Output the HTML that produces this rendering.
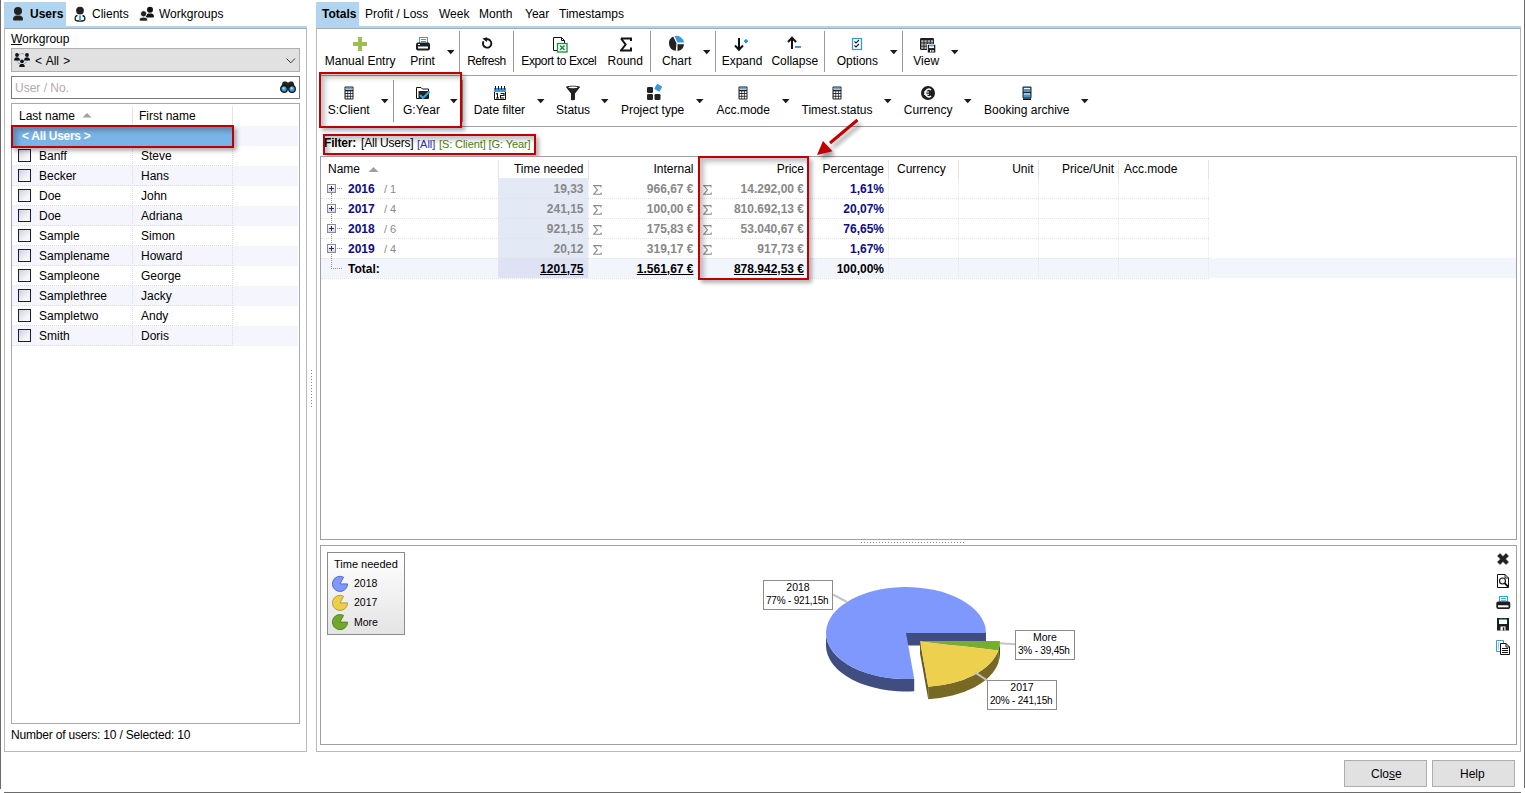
<!DOCTYPE html>
<html><head><meta charset="utf-8">
<style>
*{margin:0;padding:0;box-sizing:border-box}
html,body{width:1525px;height:793px;overflow:hidden;background:#fff}
body{position:relative;font-family:"Liberation Sans",sans-serif;font-size:12px;color:#000}
.a{position:absolute}
.t{position:absolute;white-space:nowrap;line-height:14px;font-size:12px}
.b{font-weight:bold}
.ln{position:absolute;background:#a0a0a0}
</style></head><body>
<!-- window frame -->
<div class="a" style="left:0;top:0;width:1px;height:789px;background:#6b6b6b"></div>
<div class="a" style="left:1524;top:0;width:1px;height:788px;background:#6b6b6b;left:1524px"></div>
<div class="a" style="left:4px;top:792px;width:1517px;height:1px;background:#6b6b6b"></div>

<!-- LEFT PANEL -->
<div class="a" style="left:4px;top:2px;width:62px;height:24px;background:#b1d5f0"></div>
<div class="a" style="left:4px;top:26px;width:303px;height:2px;background:#b1d5f0"></div>
<div class="a" style="left:4px;top:28px;width:303px;height:724px;border:1px solid #b9b9b9;border-top-color:#aaa"></div>
<div class="t b" style="left:30px;top:7px">Users</div>
<div class="t" style="left:92px;top:7px">Clients</div>
<div class="t" style="left:159px;top:7px">Workgroups</div>

<div class="t" style="left:11px;top:32px"><u>W</u>orkgroup</div>
<div class="a" style="left:11px;top:48px;width:289px;height:24px;background:#e1e1e1;border:1px solid #adadad"></div>
<div class="t" style="left:35px;top:54px;word-spacing:1px">&lt; All &gt;</div>
<div class="a" style="left:11px;top:76px;width:289px;height:23px;background:#fff;border:1px solid #7a7a7a"></div>
<div class="t" style="left:15px;top:81px;color:#b0aab0">User / No.</div>

<div class="a" style="left:11px;top:103px;width:289px;height:621px;border:1px solid #a8a8ae"></div>
<div class="t" style="left:19px;top:109px">Last name</div>
<div class="t" style="left:139px;top:109px">First name</div>

<div class="a" style="left:132px;top:106px;width:1px;height:20px;background:#e5e5e5"></div>
<div class="a" style="left:232px;top:106px;width:1px;height:20px;background:#e5e5e5"></div>
<svg class="a" style="left:82px;top:112px" width="10" height="6"><path d="M0.5 5.5 L5 1 L9.5 5.5Z" fill="#a0a0a0"/></svg>
<div class="a" style="left:12px;top:126px;width:286px;height:20px;background:#f5f6fd"></div>
<div class="a" style="left:12px;top:166px;width:286px;height:20px;background:#f5f6fd"></div>
<div class="a" style="left:12px;top:206px;width:286px;height:20px;background:#f5f6fd"></div>
<div class="a" style="left:12px;top:246px;width:286px;height:20px;background:#f5f6fd"></div>
<div class="a" style="left:12px;top:286px;width:286px;height:20px;background:#f5f6fd"></div>
<div class="a" style="left:12px;top:326px;width:286px;height:20px;background:#f5f6fd"></div>
<div class="a" style="left:12px;top:145px;width:221px;height:1px;border-top:1px dotted #dcdcdc"></div>
<div class="a" style="left:12px;top:165px;width:221px;height:1px;border-top:1px dotted #dcdcdc"></div>
<div class="a" style="left:12px;top:185px;width:221px;height:1px;border-top:1px dotted #dcdcdc"></div>
<div class="a" style="left:12px;top:205px;width:221px;height:1px;border-top:1px dotted #dcdcdc"></div>
<div class="a" style="left:12px;top:225px;width:221px;height:1px;border-top:1px dotted #dcdcdc"></div>
<div class="a" style="left:12px;top:245px;width:221px;height:1px;border-top:1px dotted #dcdcdc"></div>
<div class="a" style="left:12px;top:265px;width:221px;height:1px;border-top:1px dotted #dcdcdc"></div>
<div class="a" style="left:12px;top:285px;width:221px;height:1px;border-top:1px dotted #dcdcdc"></div>
<div class="a" style="left:12px;top:305px;width:221px;height:1px;border-top:1px dotted #dcdcdc"></div>
<div class="a" style="left:12px;top:325px;width:221px;height:1px;border-top:1px dotted #dcdcdc"></div>
<div class="a" style="left:12px;top:345px;width:221px;height:1px;border-top:1px dotted #dcdcdc"></div>
<div class="a" style="left:132px;top:126px;width:1px;height:220px;border-left:1px dotted #dcdcdc"></div>
<div class="a" style="left:232px;top:126px;width:1px;height:220px;border-left:1px dotted #dcdcdc"></div>
<div class="a" style="left:12px;top:126px;width:221px;height:20px;background:#79b4e8"></div>
<div class="t b" style="left:22px;top:129px;color:#fff;letter-spacing:-0.3px">&lt; All Users &gt;</div>
<div class="a" style="left:18px;top:149px;width:13px;height:13px;border:1px solid #14195a;background:linear-gradient(135deg,#d2d2d2,#f6f6f6 70%)"></div>
<div class="t" style="left:39px;top:149px">Banff</div>
<div class="t" style="left:141px;top:149px">Steve</div>
<div class="a" style="left:18px;top:169px;width:13px;height:13px;border:1px solid #14195a;background:linear-gradient(135deg,#d2d2d2,#f6f6f6 70%)"></div>
<div class="t" style="left:39px;top:169px">Becker</div>
<div class="t" style="left:141px;top:169px">Hans</div>
<div class="a" style="left:18px;top:189px;width:13px;height:13px;border:1px solid #14195a;background:linear-gradient(135deg,#d2d2d2,#f6f6f6 70%)"></div>
<div class="t" style="left:39px;top:189px">Doe</div>
<div class="t" style="left:141px;top:189px">John</div>
<div class="a" style="left:18px;top:209px;width:13px;height:13px;border:1px solid #14195a;background:linear-gradient(135deg,#d2d2d2,#f6f6f6 70%)"></div>
<div class="t" style="left:39px;top:209px">Doe</div>
<div class="t" style="left:141px;top:209px">Adriana</div>
<div class="a" style="left:18px;top:229px;width:13px;height:13px;border:1px solid #14195a;background:linear-gradient(135deg,#d2d2d2,#f6f6f6 70%)"></div>
<div class="t" style="left:39px;top:229px">Sample</div>
<div class="t" style="left:141px;top:229px">Simon</div>
<div class="a" style="left:18px;top:249px;width:13px;height:13px;border:1px solid #14195a;background:linear-gradient(135deg,#d2d2d2,#f6f6f6 70%)"></div>
<div class="t" style="left:39px;top:249px">Samplename</div>
<div class="t" style="left:141px;top:249px">Howard</div>
<div class="a" style="left:18px;top:269px;width:13px;height:13px;border:1px solid #14195a;background:linear-gradient(135deg,#d2d2d2,#f6f6f6 70%)"></div>
<div class="t" style="left:39px;top:269px">Sampleone</div>
<div class="t" style="left:141px;top:269px">George</div>
<div class="a" style="left:18px;top:289px;width:13px;height:13px;border:1px solid #14195a;background:linear-gradient(135deg,#d2d2d2,#f6f6f6 70%)"></div>
<div class="t" style="left:39px;top:289px">Samplethree</div>
<div class="t" style="left:141px;top:289px">Jacky</div>
<div class="a" style="left:18px;top:309px;width:13px;height:13px;border:1px solid #14195a;background:linear-gradient(135deg,#d2d2d2,#f6f6f6 70%)"></div>
<div class="t" style="left:39px;top:309px">Sampletwo</div>
<div class="t" style="left:141px;top:309px">Andy</div>
<div class="a" style="left:18px;top:329px;width:13px;height:13px;border:1px solid #14195a;background:linear-gradient(135deg,#d2d2d2,#f6f6f6 70%)"></div>
<div class="t" style="left:39px;top:329px">Smith</div>
<div class="t" style="left:141px;top:329px">Doris</div>
<div class="a" style="left:11px;top:125px;width:223px;height:23px;border:2px solid #c00000;box-shadow:3px 3px 4px rgba(0,0,0,0.3), inset 4px 4px 5px rgba(0,0,0,0.24)"></div>
<div class="t" style="left:11px;top:728px;letter-spacing:-0.18px">Number of users: 10 / Selected: 10</div>

<!-- RIGHT PANEL -->
<div class="a" style="left:316px;top:2px;width:43px;height:24px;background:#b1d5f0"></div>
<div class="a" style="left:316px;top:26px;width:1205px;height:2px;background:#b1d5f0"></div>
<div class="a" style="left:316px;top:28px;width:1205px;height:724px;border:1px solid #b9b9b9;border-top-color:#aaa"></div>
<div class="t b" style="left:322px;top:7px">Totals</div>
<div class="t" style="left:365px;top:7px">Profit / Loss</div>
<div class="t" style="left:439px;top:7px">Week</div>
<div class="t" style="left:479px;top:7px">Month</div>
<div class="t" style="left:525px;top:7px">Year</div>
<div class="t" style="left:559px;top:7px">Timestamps</div>

<div class="a" style="left:320px;top:75px;width:1197px;height:1px;background:#a0a0a0"></div>
<div class="a" style="left:320px;top:126px;width:1197px;height:1px;background:#a0a0a0"></div>
<div class="t" style="left:260.1px;top:54px;width:200px;text-align:center">Manual Entry</div>
<div class="t" style="left:322.6px;top:54px;width:200px;text-align:center">Print</div>
<div class="t" style="left:386.4px;top:54px;width:200px;text-align:center;letter-spacing:-0.5px">Refresh</div>
<div class="t" style="left:458.85px;top:54px;width:200px;text-align:center;letter-spacing:-0.38px">Export to Excel</div>
<div class="t" style="left:525.25px;top:54px;width:200px;text-align:center">Round</div>
<div class="t" style="left:576.7px;top:54px;width:200px;text-align:center">Chart</div>
<div class="t" style="left:642px;top:54px;width:200px;text-align:center">Expand</div>
<div class="t" style="left:694.8px;top:54px;width:200px;text-align:center">Collapse</div>
<div class="t" style="left:757.35px;top:54px;width:200px;text-align:center">Options</div>
<div class="t" style="left:826.2px;top:54px;width:200px;text-align:center">View</div>
<svg class="a" style="left:447px;top:50px" width="8" height="5"><path d="M0 0H7.5L3.75 4.2Z" fill="#1a1a1a"/></svg>
<svg class="a" style="left:703px;top:50px" width="8" height="5"><path d="M0 0H7.5L3.75 4.2Z" fill="#1a1a1a"/></svg>
<svg class="a" style="left:890px;top:50px" width="8" height="5"><path d="M0 0H7.5L3.75 4.2Z" fill="#1a1a1a"/></svg>
<svg class="a" style="left:951px;top:50px" width="8" height="5"><path d="M0 0H7.5L3.75 4.2Z" fill="#1a1a1a"/></svg>
<div class="a" style="left:459px;top:31px;width:1px;height:41px;background:#9a9a9a"></div>
<div class="a" style="left:513px;top:31px;width:1px;height:41px;background:#9a9a9a"></div>
<div class="a" style="left:650px;top:31px;width:1px;height:41px;background:#9a9a9a"></div>
<div class="a" style="left:715px;top:31px;width:1px;height:41px;background:#9a9a9a"></div>
<div class="a" style="left:824px;top:31px;width:1px;height:41px;background:#9a9a9a"></div>
<div class="a" style="left:902px;top:31px;width:1px;height:41px;background:#9a9a9a"></div>
<div class="t" style="left:248.7px;top:103px;width:200px;text-align:center">S:Client</div>
<div class="t" style="left:321.5px;top:103px;width:200px;text-align:center">G:Year</div>
<div class="t" style="left:399.45px;top:103px;width:200px;text-align:center">Date filter</div>
<div class="t" style="left:473.1px;top:103px;width:200px;text-align:center">Status</div>
<div class="t" style="left:552.6px;top:103px;width:200px;text-align:center">Project type</div>
<div class="t" style="left:643.3px;top:103px;width:200px;text-align:center">Acc.mode</div>
<div class="t" style="left:737px;top:103px;width:200px;text-align:center">Timest.status</div>
<div class="t" style="left:828.2px;top:103px;width:200px;text-align:center">Currency</div>
<div class="t" style="left:926.8px;top:103px;width:200px;text-align:center">Booking archive</div>
<svg class="a" style="left:381px;top:99px" width="8" height="5"><path d="M0 0H7.5L3.75 4.2Z" fill="#1a1a1a"/></svg>
<svg class="a" style="left:450px;top:99px" width="8" height="5"><path d="M0 0H7.5L3.75 4.2Z" fill="#1a1a1a"/></svg>
<svg class="a" style="left:537px;top:99px" width="8" height="5"><path d="M0 0H7.5L3.75 4.2Z" fill="#1a1a1a"/></svg>
<svg class="a" style="left:601px;top:99px" width="8" height="5"><path d="M0 0H7.5L3.75 4.2Z" fill="#1a1a1a"/></svg>
<svg class="a" style="left:696px;top:99px" width="8" height="5"><path d="M0 0H7.5L3.75 4.2Z" fill="#1a1a1a"/></svg>
<svg class="a" style="left:782px;top:99px" width="8" height="5"><path d="M0 0H7.5L3.75 4.2Z" fill="#1a1a1a"/></svg>
<svg class="a" style="left:884px;top:99px" width="8" height="5"><path d="M0 0H7.5L3.75 4.2Z" fill="#1a1a1a"/></svg>
<svg class="a" style="left:964px;top:99px" width="8" height="5"><path d="M0 0H7.5L3.75 4.2Z" fill="#1a1a1a"/></svg>
<svg class="a" style="left:1081px;top:99px" width="8" height="5"><path d="M0 0H7.5L3.75 4.2Z" fill="#1a1a1a"/></svg>
<div class="a" style="left:393px;top:80px;width:1px;height:42px;background:#9a9a9a"></div>
<div class="a" style="left:462px;top:80px;width:1px;height:42px;background:#9a9a9a"></div>
<svg class="a" style="left:353px;top:37px" width="14" height="14"><path d="M5 0h4v5h5v4h-5v5h-4v-5h-5v-4h5z" fill="#9dbe50"/></svg>
<svg class="a" style="left:416px;top:36px" width="15" height="15"><rect x="3.5" y="1.5" width="8" height="6" fill="#fff" stroke="#3b9ad9" stroke-width="1"/><path d="M5 3.5h5M5 5.5h5" stroke="#3b9ad9" stroke-width="1"/><rect x="0" y="6.5" width="14" height="8" rx="2" fill="#1e1e1e"/><rect x="2" y="10.5" width="10" height="2" fill="#fff"/><rect x="2" y="8" width="2" height="1" fill="#fff"/></svg>
<svg class="a" style="left:480px;top:36px" width="13" height="14"><path d="M3.6 5.2 A4.2 4.2 0 1 0 6.5 3.3" fill="none" stroke="#111" stroke-width="1.9"/><path d="M2.5 2.5 L7.2 1.2 L6.8 6 Z" fill="#111"/></svg>
<svg class="a" style="left:553px;top:37px" width="15" height="16"><path d="M0.5 0.5H8.5L11.5 3.5V13.5H0.5Z" fill="#fff" stroke="#111" stroke-width="1"/><path d="M8.5 0.5V3.5H11.5" fill="none" stroke="#111" stroke-width="1"/><rect x="4.5" y="6.5" width="9.5" height="8.5" fill="#fff" stroke="#1f8b43" stroke-width="1.3"/><path d="M7 8.5L11.5 13M11.5 8.5L7 13" stroke="#1f8b43" stroke-width="1.5"/></svg>
<svg class="a" style="left:620px;top:37px" width="13" height="15"><path d="M1 1.5H11V4M11 10.5V13.5H1L5.6 7.5L1 1.5" fill="none" stroke="#111" stroke-width="2" stroke-linejoin="miter"/></svg>
<svg class="a" style="left:668px;top:35px" width="17" height="17"><path d="M8.5 8.3 L5.2 1.6 A7.5 7.5 0 0 0 7.8 15.8 Z" fill="#222"/><path d="M9.5 7.6 L6.6 1.1 A7.5 7.5 0 0 1 16 7.6 Z" fill="#3b9ad9"/><path d="M9.5 9.2 H16 A7.5 7.5 0 0 1 9.5 15.9 Z" fill="#222"/></svg>
<svg class="a" style="left:734px;top:37px" width="15" height="15"><path d="M5 1V12.5M1 8.5L5 12.8L9 8.5" fill="none" stroke="#111" stroke-width="2"/><path d="M10 4.2H14M12 2.2V6.2" stroke="#2f8fd8" stroke-width="1.8"/></svg>
<svg class="a" style="left:787px;top:36px" width="15" height="15"><path d="M5 13V2M1 6L5 1.8L9 6" fill="none" stroke="#111" stroke-width="2"/><path d="M8 11H14" stroke="#2f8fd8" stroke-width="1.8"/></svg>
<svg class="a" style="left:851px;top:37px" width="12" height="14"><rect x="1.5" y="1.5" width="9" height="11" fill="#fff" stroke="#3b9ad9" stroke-width="1.3"/><path d="M3.5 4.5L5 6L8 3M3.5 8.5L5 10L8 7" fill="none" stroke="#222" stroke-width="1.2"/></svg>
<svg class="a" style="left:920px;top:38px" width="16" height="15"><rect x="0" y="0" width="14" height="12" rx="1.2" fill="#1e1e1e"/><rect x="1.2" y="2.2" width="2.3" height="2.3" fill="#b4b4b4"/><rect x="4.4" y="2.2" width="2.3" height="2.3" fill="#b4b4b4"/><rect x="7.6" y="2.2" width="2.3" height="2.3" fill="#b4b4b4"/><rect x="10.8" y="2.2" width="2.3" height="2.3" fill="#b4b4b4"/><rect x="1.2" y="5.4" width="2.3" height="2.3" fill="#b4b4b4"/><rect x="4.4" y="5.4" width="2.3" height="2.3" fill="#b4b4b4"/><rect x="7.6" y="5.4" width="2.3" height="2.3" fill="#b4b4b4"/><rect x="10.8" y="5.4" width="2.3" height="2.3" fill="#b4b4b4"/><rect x="1.2" y="8.6" width="2.3" height="2.3" fill="#b4b4b4"/><rect x="4.4" y="8.6" width="2.3" height="2.3" fill="#b4b4b4"/><rect x="7.6" y="8.6" width="2.3" height="2.3" fill="#b4b4b4"/><rect x="10.8" y="8.6" width="2.3" height="2.3" fill="#b4b4b4"/><rect x="7" y="6" width="9" height="9" fill="#fff"/><rect x="7.8" y="6.8" width="7.5" height="7.7" fill="#1e1e1e"/><rect x="9" y="7.5" width="5" height="2.6" fill="#fff"/><rect x="9.2" y="7.5" width="4.6" height="0.8" fill="#3b9ad9"/><rect x="10" y="12" width="1.4" height="1.8" fill="#fff"/><rect x="12.3" y="12" width="1.4" height="1.8" fill="#fff"/></svg>
<svg class="a" style="left:344px;top:86px" width="10" height="14"><rect x="0.5" y="0.5" width="9" height="13" rx="1" fill="#1e1e1e"/><rect x="1.5" y="1.6" width="7" height="2.2" fill="#fff"/><rect x="2" y="2.2" width="6" height="1" fill="#3b9ad9"/><rect x="1.60" y="5.30" width="1.8" height="1.8" fill="#fff"/><rect x="4.15" y="5.30" width="1.8" height="1.8" fill="#fff"/><rect x="6.70" y="5.30" width="1.8" height="1.8" fill="#fff"/><rect x="1.60" y="8.00" width="1.8" height="1.8" fill="#fff"/><rect x="4.15" y="8.00" width="1.8" height="1.8" fill="#fff"/><rect x="6.70" y="8.00" width="1.8" height="1.8" fill="#fff"/><rect x="1.60" y="10.70" width="1.8" height="1.8" fill="#fff"/><rect x="4.15" y="10.70" width="1.8" height="1.8" fill="#fff"/><rect x="6.70" y="10.70" width="1.8" height="1.8" fill="#fff"/></svg>
<svg class="a" style="left:738px;top:86px" width="10" height="14"><rect x="0.5" y="0.5" width="9" height="13" rx="1" fill="#1e1e1e"/><rect x="1.5" y="1.6" width="7" height="2.2" fill="#fff"/><rect x="2" y="2.2" width="6" height="1" fill="#3b9ad9"/><rect x="1.60" y="5.30" width="1.8" height="1.8" fill="#fff"/><rect x="4.15" y="5.30" width="1.8" height="1.8" fill="#fff"/><rect x="6.70" y="5.30" width="1.8" height="1.8" fill="#fff"/><rect x="1.60" y="8.00" width="1.8" height="1.8" fill="#fff"/><rect x="4.15" y="8.00" width="1.8" height="1.8" fill="#fff"/><rect x="6.70" y="8.00" width="1.8" height="1.8" fill="#fff"/><rect x="1.60" y="10.70" width="1.8" height="1.8" fill="#fff"/><rect x="4.15" y="10.70" width="1.8" height="1.8" fill="#fff"/><rect x="6.70" y="10.70" width="1.8" height="1.8" fill="#fff"/></svg>
<svg class="a" style="left:832px;top:86px" width="10" height="14"><rect x="0.5" y="0.5" width="9" height="13" rx="1" fill="#1e1e1e"/><rect x="1.5" y="1.6" width="7" height="2.2" fill="#fff"/><rect x="2" y="2.2" width="6" height="1" fill="#3b9ad9"/><rect x="1.60" y="5.30" width="1.8" height="1.8" fill="#fff"/><rect x="4.15" y="5.30" width="1.8" height="1.8" fill="#fff"/><rect x="6.70" y="5.30" width="1.8" height="1.8" fill="#fff"/><rect x="1.60" y="8.00" width="1.8" height="1.8" fill="#fff"/><rect x="4.15" y="8.00" width="1.8" height="1.8" fill="#fff"/><rect x="6.70" y="8.00" width="1.8" height="1.8" fill="#fff"/><rect x="1.60" y="10.70" width="1.8" height="1.8" fill="#fff"/><rect x="4.15" y="10.70" width="1.8" height="1.8" fill="#fff"/><rect x="6.70" y="10.70" width="1.8" height="1.8" fill="#fff"/></svg>
<svg class="a" style="left:416px;top:86px" width="15" height="15"><path d="M0.5 1.5H5L6.5 3H12.5V12.5H0.5Z" fill="#fff" stroke="#111" stroke-width="1"/><rect x="2.5" y="5" width="10" height="7.5" fill="#222"/><path d="M4 9L7 12L13.5 5.5" fill="none" stroke="#3b9ad9" stroke-width="2.2"/></svg>
<svg class="a" style="left:494px;top:86px" width="13" height="15"><path d="M0.5 5V13.5H11.5V5" fill="#fff" stroke="#111" stroke-width="1"/><rect x="0" y="2" width="12" height="4" fill="#3b9ad9"/><path d="M1.5 0V3.5M4.5 0V3.5M7.5 0V3.5M10.5 0V3.5" stroke="#111" stroke-width="1"/><path d="M2 8L3.5 7.5V12M2 12H5M6.5 7.5H10V9.5H6.5V12H10.2" fill="none" stroke="#111" stroke-width="1.1"/></svg>
<svg class="a" style="left:566px;top:85px" width="15" height="16"><path d="M0 2.2 C0 0.3 14 0.3 14 2.2 L9 8.5 V14.5 C9 15.3 5 15.6 5 14.8 V8.5 Z" fill="#222"/><ellipse cx="7" cy="2.3" rx="4.6" ry="0.9" fill="#fff"/></svg>
<svg class="a" style="left:647px;top:84px" width="15" height="16"><rect x="0" y="3" width="6" height="6" rx="1.3" fill="#222"/><rect x="0" y="10" width="6" height="6" rx="1.3" fill="#222"/><rect x="7.5" y="10" width="6" height="6" rx="1.3" fill="#222"/><rect x="8.2" y="0.8" width="6" height="6" rx="0.8" transform="rotate(30 11.2 3.8)" fill="#3b9ad9"/></svg>
<svg class="a" style="left:921px;top:86px" width="15" height="15"><circle cx="7" cy="7" r="7" fill="#1e1e1e"/><path d="M10 4 A3.5 3.8 0 1 0 10 10" fill="none" stroke="#fff" stroke-width="1.6"/><path d="M3 6H8M3 8.2H8" stroke="#fff" stroke-width="1.1"/></svg>
<svg class="a" style="left:1022px;top:86px" width="10" height="14"><rect x="0.5" y="0.5" width="9" height="12" rx="1" fill="#222"/><rect x="1.5" y="1.5" width="7" height="4.5" fill="#3b9ad9"/><rect x="1.5" y="7" width="7" height="4.5" fill="#3b9ad9"/><rect x="2" y="2" width="6" height="0.9" fill="#fff"/><rect x="2" y="7.5" width="6" height="0.9" fill="#fff"/><rect x="1" y="12.5" width="8" height="1.5" fill="#111"/></svg>
<div class="a" style="left:319px;top:72px;width:143px;height:56px;border:2px solid #c00000;box-shadow:3px 3px 4px rgba(0,0,0,0.3), inset 4px 4px 5px rgba(0,0,0,0.24)"></div>
<div class="t b" style="left:324px;top:136px;letter-spacing:-0.2px">Filter:</div>
<div class="t" style="left:361px;top:136px;letter-spacing:-0.2px">[All Users]</div>
<div class="t" style="left:417px;top:137px;color:#2a2ab8;font-size:11px">[All]</div>
<div class="t" style="left:439px;top:137px;color:#4f7d0a;font-size:11px;letter-spacing:-0.1px">[S: Client] [G: Year]</div>
<div class="a" style="left:323px;top:134px;width:213px;height:21px;border:2px solid #c00000;box-shadow:3px 3px 4px rgba(0,0,0,0.3), inset 4px 4px 5px rgba(0,0,0,0.24)"></div>
<div class="a" style="left:320px;top:156px;width:1197px;height:384px;border:1px solid #a0a0a0;background:#fff"></div>
<div class="a" style="left:321px;top:258px;width:1195px;height:20px;background:#f3f5fd"></div>
<div class="a" style="left:498px;top:178px;width:90px;height:80px;background:#e4e9f6"></div>
<div class="a" style="left:498px;top:258px;width:90px;height:20px;background:#dde3f4"></div>
<div class="a" style="left:498px;top:160px;width:1px;height:18px;background:#e3e3e3"></div>
<div class="a" style="left:588px;top:160px;width:1px;height:18px;background:#e3e3e3"></div>
<div class="a" style="left:888px;top:160px;width:1px;height:18px;background:#e3e3e3"></div>
<div class="a" style="left:958px;top:160px;width:1px;height:18px;background:#e3e3e3"></div>
<div class="a" style="left:1038px;top:160px;width:1px;height:18px;background:#e3e3e3"></div>
<div class="a" style="left:1118px;top:160px;width:1px;height:18px;background:#e3e3e3"></div>
<div class="a" style="left:1208px;top:160px;width:1px;height:18px;background:#e3e3e3"></div>
<div class="a" style="left:498px;top:178px;width:1px;height:100px;border-left:1px dotted #e8e8e8"></div>
<div class="a" style="left:588px;top:178px;width:1px;height:100px;border-left:1px dotted #e8e8e8"></div>
<div class="a" style="left:698px;top:178px;width:1px;height:100px;border-left:1px dotted #e8e8e8"></div>
<div class="a" style="left:808px;top:178px;width:1px;height:100px;border-left:1px dotted #e8e8e8"></div>
<div class="a" style="left:888px;top:178px;width:1px;height:100px;border-left:1px dotted #e8e8e8"></div>
<div class="a" style="left:958px;top:178px;width:1px;height:100px;border-left:1px dotted #e8e8e8"></div>
<div class="a" style="left:1038px;top:178px;width:1px;height:100px;border-left:1px dotted #e8e8e8"></div>
<div class="a" style="left:1118px;top:178px;width:1px;height:100px;border-left:1px dotted #e8e8e8"></div>
<div class="a" style="left:1208px;top:178px;width:1px;height:100px;border-left:1px dotted #e8e8e8"></div>
<div class="a" style="left:321px;top:198px;width:888px;height:1px;border-top:1px dotted #e2e2e2"></div>
<div class="a" style="left:321px;top:218px;width:888px;height:1px;border-top:1px dotted #e2e2e2"></div>
<div class="a" style="left:321px;top:238px;width:888px;height:1px;border-top:1px dotted #e2e2e2"></div>
<div class="a" style="left:321px;top:258px;width:888px;height:1px;border-top:1px dotted #e2e2e2"></div>
<div class="a" style="left:321px;top:278px;width:888px;height:1px;border-top:1px dotted #e2e2e2"></div>
<div class="t" style="left:328px;top:162px;">Name</div>
<svg class="a" style="left:368px;top:166px" width="11" height="7"><path d="M0.5 6L5.5 1L10.5 6Z" fill="#a0a0a0"/></svg>
<div class="t" style="left:283.5px;top:162px;width:300px;text-align:right;">Time needed</div>
<div class="t" style="left:393.5px;top:162px;width:300px;text-align:right;">Internal</div>
<div class="t" style="left:504px;top:162px;width:300px;text-align:right;">Price</div>
<div class="t" style="left:584px;top:162px;width:300px;text-align:right;">Percentage</div>
<div class="t" style="left:897px;top:162px;">Currency</div>
<div class="t" style="left:733.5px;top:162px;width:300px;text-align:right;">Unit</div>
<div class="t" style="left:814px;top:162px;width:300px;text-align:right;">Price/Unit</div>
<div class="t" style="left:1124px;top:162px;">Acc.mode</div>
<div class="a" style="left:331px;top:193px;width:1px;height:76px;border-left:1px dotted #909090"></div>
<svg class="a" style="left:327px;top:184px" width="9" height="9"><defs><linearGradient id="gb0" x1="0" y1="0" x2="0" y2="1"><stop offset="0" stop-color="#fff"/><stop offset="1" stop-color="#d4d4d4"/></linearGradient></defs><rect x="0.5" y="0.5" width="8" height="8" fill="url(#gb0)" stroke="#8a8a8a"/><path d="M2 4.5H7M4.5 2V7" stroke="#1c2a7a" stroke-width="1"/></svg>
<div class="a" style="left:337px;top:188px;width:5px;height:1px;border-top:1px dotted #909090"></div>
<div class="t" style="left:348px;top:182px;font-weight:bold;color:#0d0d84">2016</div>
<div class="t" style="left:384px;top:182px;color:#8a8a8a;font-size:11px;line-height:15px">/ 1</div>
<div class="t" style="left:283.5px;top:182px;width:300px;text-align:right;font-weight:bold;color:#888">19,33</div>
<svg class="a" style="left:593px;top:185px" width="9" height="11"><path d="M8 2.4V0.6H0.8L4.4 4.9L0.8 9.2H8.2V7.4" fill="none" stroke="#8a8a8a" stroke-width="1.1"/></svg>
<div class="t" style="left:393.5px;top:182px;width:300px;text-align:right;font-weight:bold;color:#888">966,67 €</div>
<svg class="a" style="left:703px;top:185px" width="9" height="11"><path d="M8 2.4V0.6H0.8L4.4 4.9L0.8 9.2H8.2V7.4" fill="none" stroke="#8a8a8a" stroke-width="1.1"/></svg>
<div class="t" style="left:504px;top:182px;width:300px;text-align:right;font-weight:bold;color:#888">14.292,00 €</div>
<div class="t" style="left:584px;top:182px;width:300px;text-align:right;font-weight:bold;color:#0d0d84">1,61%</div>
<svg class="a" style="left:327px;top:204px" width="9" height="9"><defs><linearGradient id="gb1" x1="0" y1="0" x2="0" y2="1"><stop offset="0" stop-color="#fff"/><stop offset="1" stop-color="#d4d4d4"/></linearGradient></defs><rect x="0.5" y="0.5" width="8" height="8" fill="url(#gb1)" stroke="#8a8a8a"/><path d="M2 4.5H7M4.5 2V7" stroke="#1c2a7a" stroke-width="1"/></svg>
<div class="a" style="left:337px;top:208px;width:5px;height:1px;border-top:1px dotted #909090"></div>
<div class="t" style="left:348px;top:202px;font-weight:bold;color:#0d0d84">2017</div>
<div class="t" style="left:384px;top:202px;color:#8a8a8a;font-size:11px;line-height:15px">/ 4</div>
<div class="t" style="left:283.5px;top:202px;width:300px;text-align:right;font-weight:bold;color:#888">241,15</div>
<svg class="a" style="left:593px;top:205px" width="9" height="11"><path d="M8 2.4V0.6H0.8L4.4 4.9L0.8 9.2H8.2V7.4" fill="none" stroke="#8a8a8a" stroke-width="1.1"/></svg>
<div class="t" style="left:393.5px;top:202px;width:300px;text-align:right;font-weight:bold;color:#888">100,00 €</div>
<svg class="a" style="left:703px;top:205px" width="9" height="11"><path d="M8 2.4V0.6H0.8L4.4 4.9L0.8 9.2H8.2V7.4" fill="none" stroke="#8a8a8a" stroke-width="1.1"/></svg>
<div class="t" style="left:504px;top:202px;width:300px;text-align:right;font-weight:bold;color:#888">810.692,13 €</div>
<div class="t" style="left:584px;top:202px;width:300px;text-align:right;font-weight:bold;color:#0d0d84">20,07%</div>
<svg class="a" style="left:327px;top:224px" width="9" height="9"><defs><linearGradient id="gb2" x1="0" y1="0" x2="0" y2="1"><stop offset="0" stop-color="#fff"/><stop offset="1" stop-color="#d4d4d4"/></linearGradient></defs><rect x="0.5" y="0.5" width="8" height="8" fill="url(#gb2)" stroke="#8a8a8a"/><path d="M2 4.5H7M4.5 2V7" stroke="#1c2a7a" stroke-width="1"/></svg>
<div class="a" style="left:337px;top:228px;width:5px;height:1px;border-top:1px dotted #909090"></div>
<div class="t" style="left:348px;top:222px;font-weight:bold;color:#0d0d84">2018</div>
<div class="t" style="left:384px;top:222px;color:#8a8a8a;font-size:11px;line-height:15px">/ 6</div>
<div class="t" style="left:283.5px;top:222px;width:300px;text-align:right;font-weight:bold;color:#888">921,15</div>
<svg class="a" style="left:593px;top:225px" width="9" height="11"><path d="M8 2.4V0.6H0.8L4.4 4.9L0.8 9.2H8.2V7.4" fill="none" stroke="#8a8a8a" stroke-width="1.1"/></svg>
<div class="t" style="left:393.5px;top:222px;width:300px;text-align:right;font-weight:bold;color:#888">175,83 €</div>
<svg class="a" style="left:703px;top:225px" width="9" height="11"><path d="M8 2.4V0.6H0.8L4.4 4.9L0.8 9.2H8.2V7.4" fill="none" stroke="#8a8a8a" stroke-width="1.1"/></svg>
<div class="t" style="left:504px;top:222px;width:300px;text-align:right;font-weight:bold;color:#888">53.040,67 €</div>
<div class="t" style="left:584px;top:222px;width:300px;text-align:right;font-weight:bold;color:#0d0d84">76,65%</div>
<svg class="a" style="left:327px;top:244px" width="9" height="9"><defs><linearGradient id="gb3" x1="0" y1="0" x2="0" y2="1"><stop offset="0" stop-color="#fff"/><stop offset="1" stop-color="#d4d4d4"/></linearGradient></defs><rect x="0.5" y="0.5" width="8" height="8" fill="url(#gb3)" stroke="#8a8a8a"/><path d="M2 4.5H7M4.5 2V7" stroke="#1c2a7a" stroke-width="1"/></svg>
<div class="a" style="left:337px;top:248px;width:5px;height:1px;border-top:1px dotted #909090"></div>
<div class="t" style="left:348px;top:242px;font-weight:bold;color:#0d0d84">2019</div>
<div class="t" style="left:384px;top:242px;color:#8a8a8a;font-size:11px;line-height:15px">/ 4</div>
<div class="t" style="left:283.5px;top:242px;width:300px;text-align:right;font-weight:bold;color:#888">20,12</div>
<svg class="a" style="left:593px;top:245px" width="9" height="11"><path d="M8 2.4V0.6H0.8L4.4 4.9L0.8 9.2H8.2V7.4" fill="none" stroke="#8a8a8a" stroke-width="1.1"/></svg>
<div class="t" style="left:393.5px;top:242px;width:300px;text-align:right;font-weight:bold;color:#888">319,17 €</div>
<svg class="a" style="left:703px;top:245px" width="9" height="11"><path d="M8 2.4V0.6H0.8L4.4 4.9L0.8 9.2H8.2V7.4" fill="none" stroke="#8a8a8a" stroke-width="1.1"/></svg>
<div class="t" style="left:504px;top:242px;width:300px;text-align:right;font-weight:bold;color:#888">917,73 €</div>
<div class="t" style="left:584px;top:242px;width:300px;text-align:right;font-weight:bold;color:#0d0d84">1,67%</div>
<div class="a" style="left:331px;top:268px;width:11px;height:1px;border-top:1px dotted #909090"></div>
<div class="t" style="left:348px;top:262px;font-weight:bold">Total:</div>
<div class="t" style="left:283.5px;top:262px;width:300px;text-align:right;font-weight:bold"><u>1201,75</u></div>
<div class="t" style="left:393.5px;top:262px;width:300px;text-align:right;font-weight:bold"><u>1.561,67 €</u></div>
<div class="t" style="left:504px;top:262px;width:300px;text-align:right;font-weight:bold"><u>878.942,53 €</u></div>
<div class="t" style="left:584px;top:262px;width:300px;text-align:right;font-weight:bold">100,00%</div>
<div class="a" style="left:698px;top:156px;width:111px;height:124px;border:2px solid #c00000;box-shadow:3px 3px 4px rgba(0,0,0,0.3), inset 4px 4px 5px rgba(0,0,0,0.24)"></div>
<svg class="a" style="left:810px;top:112px;overflow:visible" width="60" height="50"><defs><filter id="sh" x="-50%" y="-50%" width="200%" height="200%"><feGaussianBlur stdDeviation="2"/></filter></defs><g transform="translate(3,4)" opacity="0.4" filter="url(#sh)"><path d="M47.5 8L20 31" stroke="#000" stroke-width="3"/><path d="M7 43L13 29L22.5 39.3Z" fill="#000"/></g><path d="M47.5 8L20 31" stroke="#c00000" stroke-width="3"/><path d="M7 43L13 29L22.5 39.3Z" fill="#c00000"/></svg>
<svg class="a" style="left:861px;top:542px" width="105" height="1"><rect x="0" y="0" width="1" height="1" fill="#8a8a8a"/><rect x="3" y="0" width="1" height="1" fill="#8a8a8a"/><rect x="6" y="0" width="1" height="1" fill="#8a8a8a"/><rect x="9" y="0" width="1" height="1" fill="#8a8a8a"/><rect x="12" y="0" width="1" height="1" fill="#8a8a8a"/><rect x="15" y="0" width="1" height="1" fill="#8a8a8a"/><rect x="18" y="0" width="1" height="1" fill="#8a8a8a"/><rect x="21" y="0" width="1" height="1" fill="#8a8a8a"/><rect x="24" y="0" width="1" height="1" fill="#8a8a8a"/><rect x="27" y="0" width="1" height="1" fill="#8a8a8a"/><rect x="30" y="0" width="1" height="1" fill="#8a8a8a"/><rect x="33" y="0" width="1" height="1" fill="#8a8a8a"/><rect x="36" y="0" width="1" height="1" fill="#8a8a8a"/><rect x="39" y="0" width="1" height="1" fill="#8a8a8a"/><rect x="42" y="0" width="1" height="1" fill="#8a8a8a"/><rect x="45" y="0" width="1" height="1" fill="#8a8a8a"/><rect x="48" y="0" width="1" height="1" fill="#8a8a8a"/><rect x="51" y="0" width="1" height="1" fill="#8a8a8a"/><rect x="54" y="0" width="1" height="1" fill="#8a8a8a"/><rect x="57" y="0" width="1" height="1" fill="#8a8a8a"/><rect x="60" y="0" width="1" height="1" fill="#8a8a8a"/><rect x="63" y="0" width="1" height="1" fill="#8a8a8a"/><rect x="66" y="0" width="1" height="1" fill="#8a8a8a"/><rect x="69" y="0" width="1" height="1" fill="#8a8a8a"/><rect x="72" y="0" width="1" height="1" fill="#8a8a8a"/><rect x="75" y="0" width="1" height="1" fill="#8a8a8a"/><rect x="78" y="0" width="1" height="1" fill="#8a8a8a"/><rect x="81" y="0" width="1" height="1" fill="#8a8a8a"/><rect x="84" y="0" width="1" height="1" fill="#8a8a8a"/><rect x="87" y="0" width="1" height="1" fill="#8a8a8a"/><rect x="90" y="0" width="1" height="1" fill="#8a8a8a"/><rect x="93" y="0" width="1" height="1" fill="#8a8a8a"/><rect x="96" y="0" width="1" height="1" fill="#8a8a8a"/><rect x="99" y="0" width="1" height="1" fill="#8a8a8a"/><rect x="102" y="0" width="1" height="1" fill="#8a8a8a"/></svg>
<svg class="a" style="left:311px;top:370px" width="1" height="39"><rect x="0" y="0" width="1" height="1" fill="#8a8a8a"/><rect x="0" y="3" width="1" height="1" fill="#8a8a8a"/><rect x="0" y="6" width="1" height="1" fill="#8a8a8a"/><rect x="0" y="9" width="1" height="1" fill="#8a8a8a"/><rect x="0" y="12" width="1" height="1" fill="#8a8a8a"/><rect x="0" y="15" width="1" height="1" fill="#8a8a8a"/><rect x="0" y="18" width="1" height="1" fill="#8a8a8a"/><rect x="0" y="21" width="1" height="1" fill="#8a8a8a"/><rect x="0" y="24" width="1" height="1" fill="#8a8a8a"/><rect x="0" y="27" width="1" height="1" fill="#8a8a8a"/><rect x="0" y="30" width="1" height="1" fill="#8a8a8a"/><rect x="0" y="33" width="1" height="1" fill="#8a8a8a"/><rect x="0" y="36" width="1" height="1" fill="#8a8a8a"/></svg>
<div class="a" style="left:320px;top:545px;width:1197px;height:200px;border:1px solid #a0a0a0;background:#fff"></div>
<div class="a" style="left:327px;top:552px;width:78px;height:83px;border:1px solid #8c8c8c;background:linear-gradient(#ffffff,#e4e4e4)"></div>
<div class="t" style="left:334px;top:558px;font-size:11px;line-height:13px">Time needed</div>
<svg class="a" style="left:320px;top:570px" width="40" height="70"><path d="M20.00 13.90 L27.60 13.90 A7.6 7.6 0 1 1 23.57 7.19 Z" fill="#7f98fd" stroke="#4d61c4" stroke-width="0.9" stroke-linejoin="round"/><path d="M20.00 32.90 L27.60 32.90 A7.6 7.6 0 1 1 23.57 26.19 Z" fill="#ecce4a" stroke="#b09530" stroke-width="0.9" stroke-linejoin="round"/><path d="M20.00 52.10 L27.60 52.10 A7.6 7.6 0 1 1 23.57 45.39 Z" fill="#73a92a" stroke="#4f7c1c" stroke-width="0.9" stroke-linejoin="round"/></svg>
<div class="t" style="left:354px;top:577px;font-size:10.5px;line-height:13px">2018</div>
<div class="t" style="left:354px;top:596px;font-size:10.5px;line-height:13px">2017</div>
<div class="t" style="left:354px;top:615.5px;font-size:10.5px;line-height:13px">More</div>
<svg class="a" style="left:0;top:0" width="1525" height="793"><path d="M914.22 678.76 A80 46 0 0 1 826.00 633.00 L826.00 645.50 A80 46 0 0 0 914.22 691.26 Z" fill="#3f4d80"/><path d="M906.00 633.00 L986.00 633.00 L986.00 645.50 L906.00 645.50 Z" fill="#3f4d80"/><path d="M906.00 633.00 L914.22 678.76 A80 46 0 1 1 986.00 633.00 Z" fill="#7f98fd"/><path d="M1000.00 641.00 A80 46 0 0 1 998.31 650.41 L998.31 662.91 A80 46 0 0 0 1000.00 653.50 Z" fill="#3c5a14"/><path d="M998.31 650.41 A80 46 0 0 1 928.22 686.76 L928.22 699.26 A80 46 0 0 0 998.31 662.91 Z" fill="#786826"/><path d="M920.00 641.00 L928.22 686.76 L928.22 699.26 L920.00 653.50 Z" fill="#6a5c20"/><path d="M920.00 641.00 L1000.00 641.00 A80 46 0 0 1 998.31 650.41 Z" fill="#77ae2a"/><path d="M920.00 641.00 L998.31 650.41 A80 46 0 0 1 928.22 686.76 Z" fill="#edd04e"/><path d="M833 594.5L847 602M1000 643.2L1015 644.3M975 672.4L988 681" stroke="#c4c4c4" stroke-width="2" fill="none"/></svg>
<div class="a" style="left:763px;top:580px;width:70px;height:30px;border:1px solid #8c8c8c;background:#fff"></div>
<div class="t" style="left:738.0px;top:581px;width:120px;text-align:center;font-size:10.5px;line-height:13px">2018</div>
<div class="t" style="left:766px;top:594px;font-size:10px;line-height:13px;letter-spacing:-0.2px">77% - 921,15h</div>
<div class="a" style="left:1015px;top:630px;width:60px;height:30px;border:1px solid #8c8c8c;background:#fff"></div>
<div class="t" style="left:985.0px;top:631px;width:120px;text-align:center;font-size:10.5px;line-height:13px">More</div>
<div class="t" style="left:1018px;top:644px;font-size:10px;line-height:13px;letter-spacing:-0.2px">3% - 39,45h</div>
<div class="a" style="left:987px;top:680px;width:70px;height:30px;border:1px solid #8c8c8c;background:#fff"></div>
<div class="t" style="left:962.0px;top:681px;width:120px;text-align:center;font-size:10.5px;line-height:13px">2017</div>
<div class="t" style="left:990px;top:694px;font-size:10px;line-height:13px;letter-spacing:-0.2px">20% - 241,15h</div>
<svg class="a" style="left:13px;top:6px" width="11" height="16"><circle cx="5" cy="4.9" r="4" fill="#222"/><path d="M0 13.5 C0 10 2.5 9.6 5 9.6 C7.5 9.6 10 10 10 13.5 C10 14.6 8.5 14.6 5 14.6 C1.5 14.6 0 14.6 0 13.5Z" fill="#222"/></svg>
<svg class="a" style="left:74px;top:6px" width="12" height="16"><circle cx="6" cy="4.6" r="3.9" fill="#222"/><path d="M3.5 9.5 C1 10 1 12 1.2 13.5 C1.5 15 4 15 6 15 C8 15 10.5 15 10.8 13.5 C11 12 11 10 8.5 9.5" fill="none" stroke="#222" stroke-width="1.3"/><path d="M6 9.5V15" stroke="#3b9ad9" stroke-width="1.8"/></svg>
<svg class="a" style="left:139px;top:6px" width="16" height="16"><circle cx="11" cy="3.8" r="3" fill="#111"/><path d="M6.8 10.5 C6.8 8 9 7.5 11 7.5 C13 7.5 15 8 15 10.5 C15 11.5 14 11.5 11 11.5 C8 11.5 6.8 11.5 6.8 10.5Z" fill="#111"/><circle cx="4.6" cy="7.8" r="3.1" fill="#222" stroke="#fff" stroke-width="0.8"/><path d="M0.3 14 C0.3 11.8 2.5 11.2 4.6 11.2 C6.7 11.2 8.6 11.8 8.6 14 C8.6 15 7.5 15 4.6 15 C1.7 15 0.3 15 0.3 14Z" fill="#222" stroke="#fff" stroke-width="0.6"/></svg>
<svg class="a" style="left:14px;top:52px" width="16" height="16"><circle cx="8" cy="7" r="5.3" fill="none" stroke="#3b9ad9" stroke-width="1" stroke-dasharray="2.2 1.2"/><circle cx="3" cy="3" r="1.9" fill="#111"/><path d="M0 8.5C0 6 1.5 5.5 3 5.5S6 6 6 8.5Z" fill="#111"/><circle cx="13" cy="3" r="1.9" fill="#111"/><path d="M10 8.5C10 6 11.5 5.5 13 5.5S16 6 16 8.5Z" fill="#111"/><circle cx="8" cy="9.3" r="1.9" fill="#111"/><path d="M5.2 15C5.2 12.5 6.5 12 8 12S10.8 12.5 10.8 15Z" fill="#111"/></svg>
<svg class="a" style="left:286px;top:58px" width="10" height="6"><path d="M0.5 0.5L4.8 4.8L9 0.5" fill="none" stroke="#333" stroke-width="1"/></svg>
<svg class="a" style="left:280px;top:81px" width="16" height="12"><path d="M2.5 1.5C3 0.5 4.5 0.3 6 0.5L7.5 1.5H8.5L10 0.5C11.5 0.3 13 0.5 13.5 1.5L15 7H1Z" fill="#222"/><circle cx="4" cy="8" r="3.3" fill="#3b9ad9" stroke="#111" stroke-width="1.3"/><circle cx="12" cy="8" r="3.3" fill="#3b9ad9" stroke="#111" stroke-width="1.3"/><circle cx="3.6" cy="7.3" r="1" fill="#cfe8fa"/><circle cx="11.6" cy="7.3" r="1" fill="#cfe8fa"/></svg>
<svg class="a" style="left:1497px;top:553px" width="12" height="12"><path d="M3 0.5L6 3.5L9 0.5L11.5 3L8.5 6L11.5 9L9 11.5L6 8.5L3 11.5L0.5 9L3.5 6L0.5 3Z" fill="#222" stroke="#222" stroke-width="0.6" stroke-linejoin="round"/></svg>
<svg class="a" style="left:1497px;top:574px" width="13" height="14"><path d="M0.5 0.5H8L11.5 4V13.5H0.5Z" fill="#fff" stroke="#111" stroke-width="1"/><path d="M8 0.5V4H11.5" fill="none" stroke="#111" stroke-width="0.9"/><circle cx="5.5" cy="7" r="3" fill="#e8f2fb" stroke="#111" stroke-width="1.1"/><path d="M7.6 9.2L11.5 13" stroke="#111" stroke-width="1.8"/></svg>
<svg class="a" style="left:1496px;top:596px" width="15" height="14"><rect x="3.5" y="0.5" width="8" height="5.5" fill="#fff" stroke="#3b9ad9" stroke-width="1"/><path d="M5 2.5h5M5 4.3h5" stroke="#3b9ad9" stroke-width="0.9"/><rect x="0.3" y="5.5" width="14" height="7.5" rx="2" fill="#1e1e1e"/><rect x="2" y="9.3" width="10.5" height="2" fill="#fff"/></svg>
<svg class="a" style="left:1497px;top:618px" width="12" height="13"><path d="M0 0H12V12.5H0Z" fill="#1e1e1e"/><rect x="2" y="1.5" width="8" height="4.5" fill="#fff"/><rect x="2.5" y="0.8" width="7" height="1" fill="#3b9ad9"/><rect x="3.5" y="8.5" width="5" height="4" fill="#fff"/><rect x="5.8" y="9.3" width="1.5" height="3.2" fill="#1e1e1e"/></svg>
<svg class="a" style="left:1496px;top:640px" width="15" height="15"><path d="M0.5 0.5H7.5V11.5H0.5Z" fill="#fff" stroke="#3b9ad9" stroke-width="1"/><path d="M2 3h1M2 5h1M2 7h1M2 9h1" stroke="#3b9ad9" stroke-width="1"/><path d="M4.5 3.5H10L13.5 7V14.5H4.5Z" fill="#fff" stroke="#111" stroke-width="1"/><path d="M10 3.5V7H13.5" fill="none" stroke="#111" stroke-width="1"/><path d="M6 8.5H12M6 10.5H12M6 12.5H12" stroke="#111" stroke-width="1"/></svg>
<!-- buttons -->
<div class="a" style="left:1344px;top:760px;width:83px;height:27px;background:#e1e1e1;border:1px solid #adadad"></div>
<div class="t" style="left:1371px;top:767px">Clo<u>s</u>e</div>
<div class="a" style="left:1432px;top:760px;width:83px;height:27px;background:#e1e1e1;border:1px solid #adadad"></div>
<div class="t" style="left:1460px;top:767px">Help</div>
</body></html>
